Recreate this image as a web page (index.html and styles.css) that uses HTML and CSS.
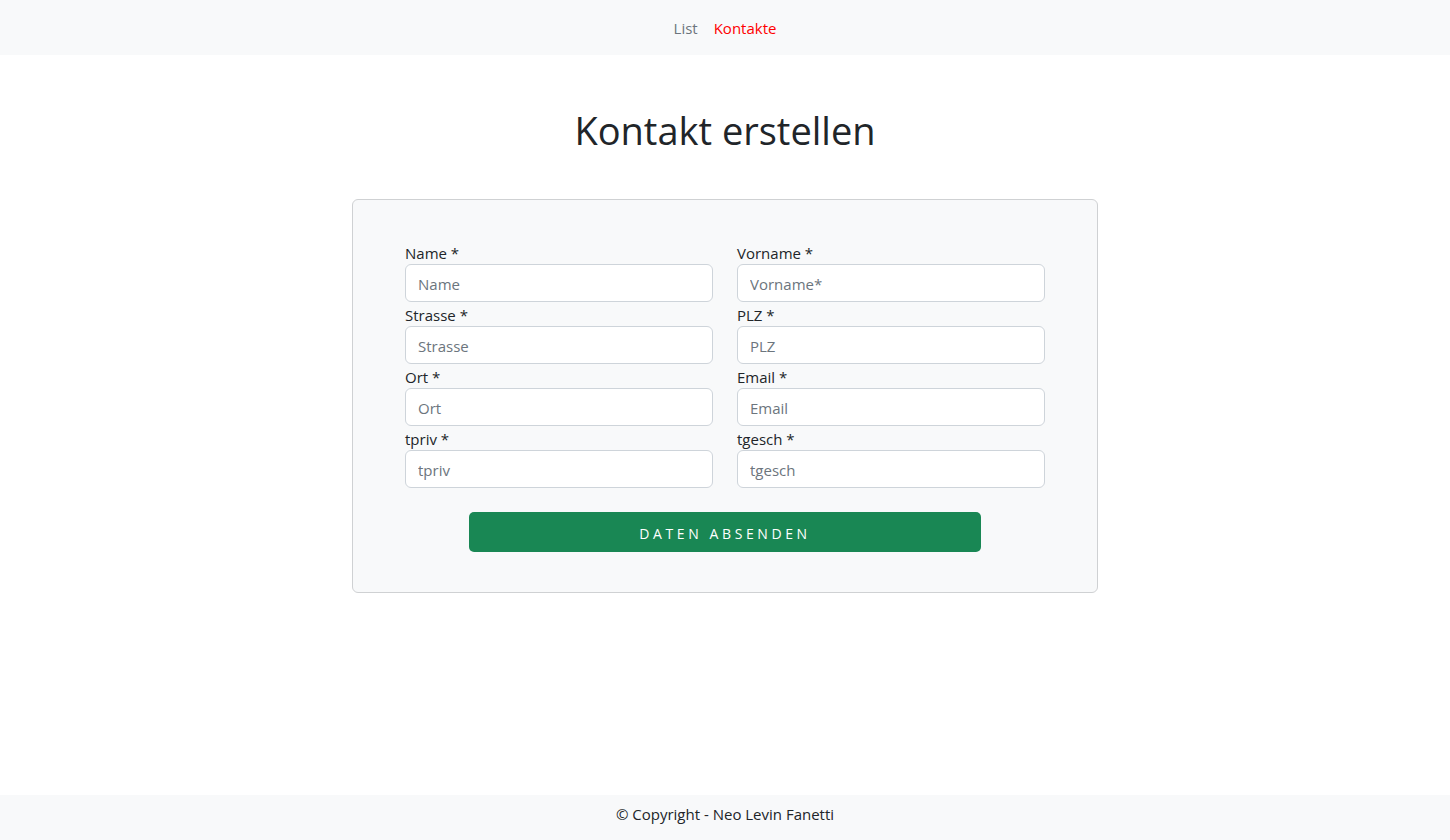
FILE: index.html
```html
<!DOCTYPE html>
<html lang="de">
<head>
<meta charset="utf-8">
<title>Kontakt erstellen</title>
<link rel="stylesheet" href="styles.css">
</head>
<body>
<div class="page">
  <nav class="navbar">
    <a class="nav-link" href="#">List</a>
    <a class="nav-link active" href="#">Kontakte</a>
  </nav>
  <main class="main">
    <h1 class="title">Kontakt erstellen</h1>
    <form class="card">
      <div class="grid">
        <div class="field"><label>Name *</label><input type="text" placeholder="Name"></div>
        <div class="field"><label>Vorname *</label><input type="text" placeholder="Vorname*"></div>
        <div class="field"><label>Strasse *</label><input type="text" placeholder="Strasse"></div>
        <div class="field"><label>PLZ *</label><input type="text" placeholder="PLZ"></div>
        <div class="field"><label>Ort *</label><input type="text" placeholder="Ort"></div>
        <div class="field"><label>Email *</label><input type="text" placeholder="Email"></div>
        <div class="field"><label>tpriv *</label><input type="text" placeholder="tpriv"></div>
        <div class="field"><label>tgesch *</label><input type="text" placeholder="tgesch"></div>
      </div>
      <button type="button" class="submit">Daten absenden</button>
    </form>
  </main>
  <footer class="footer">© Copyright - Neo Levin Fanetti</footer>
</div>
</body>
</html>
```
FILE: styles.css
```css
* { box-sizing: border-box; }
html, body { margin: 0; padding: 0; }
body {
  font-family: "Open Sans", "Noto Sans", sans-serif;
  font-size: 15px;
  color: #212529;
  background: #fff;
}
.page {
  min-height: 840px;
  display: flex;
  flex-direction: column;
}
.navbar {
  height: 55px;
  background: #f8f9fa;
  display: flex;
  justify-content: center;
  align-items: center;
  gap: 16px;
}
.nav-link {
  color: #6c757d;
  text-decoration: none;
  font-size: 15px;
  line-height: 24px;
}
.nav-link.active { color: #ff0000; }
.main {
  flex: 1;
  display: flex;
  flex-direction: column;
  align-items: center;
}
.title {
  margin: 51px 0 45px;
  font-size: 38px;
  font-weight: 400;
  line-height: 48px;
  color: #212529;
}
.card {
  width: 746px;
  background: #f8f9fa;
  border: 1px solid #cfd1d3;
  border-radius: 6px;
  padding: 40px 52px 40px;
  display: flex;
  flex-direction: column;
  align-items: center;
}
.grid {
  width: 100%;
  display: grid;
  grid-template-columns: 308px 308px;
  column-gap: 24px;
}
.field {
  display: flex;
  flex-direction: column;
}
.field label {
  line-height: 24px;
  padding-top: 1px;
  margin-bottom: -1px;
  font-size: 15px;
  color: #212529;
}
.field input {
  height: 38px;
  border: 1px solid #ced4da;
  border-radius: 6px;
  background: #fff;
  padding: 1px 12px 0;
  font-family: inherit;
  font-size: 15px;
  color: #212529;
}
.field input::placeholder { color: #6c757d; }
.submit {
  margin-top: 24px;
  width: 512px;
  height: 40px;
  padding-top: 3px;
  background: #198754;
  color: #fff;
  border: none;
  border-radius: 5px;
  font-family: inherit;
  font-size: 14px;
  letter-spacing: 3.6px;
  text-transform: uppercase;
  cursor: pointer;
}
.footer {
  height: 45px;
  background: #f8f9fa;
  display: flex;
  justify-content: center;
  align-items: flex-start;
  padding-top: 7px;
  line-height: 24px;
  font-size: 15px;
  color: #212529;
}
```
